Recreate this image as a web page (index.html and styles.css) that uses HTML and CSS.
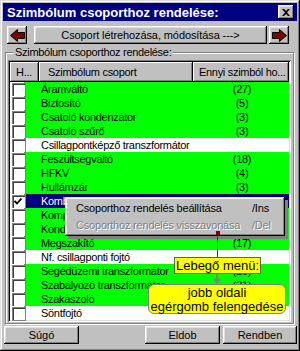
FILE: index.html
```html
<!DOCTYPE html>
<html lang="hu">
<head>
  <meta charset="UTF-8" />
  <title>Szimbólum csoporthoz rendelése</title>
  <link rel="stylesheet" href="styles.css">
</head>
<body>

  <div class="window">

    <!-- title bar -->
    <div class="titlebar">
      <span class="title">Szimbólum csoporthoz rendelése:</span>
      <span class="close">
        <svg width="8" height="7" viewBox="0 0 8 7"><path d="M0 0h2l2 2 2-2h2L5 3.5 8 7H6L4 5 2 7H0l3-3.5z" fill="#000"/></svg>
      </span>
    </div>

    <!-- navigation -->
    <div class="navrow">
      <button class="btn arrow">
        <svg width="15" height="13" viewBox="0 0 15 13"><polygon points="0.5,6.5 7.5,0.5 7.5,3.5 14.5,3.5 14.5,9.5 7.5,9.5 7.5,12.5" fill="#800000" stroke="#000"/></svg>
      </button>
      <button class="btn wide">Csoport létrehozása, módosítása ---&gt;</button>
      <button class="btn arrow">
        <svg width="15" height="13" viewBox="0 0 15 13"><polygon points="14.5,6.5 7.5,0.5 7.5,3.5 0.5,3.5 0.5,9.5 7.5,9.5 7.5,12.5" fill="#800000" stroke="#000"/></svg>
      </button>
    </div>

    <!-- group -->
    <fieldset class="group">
      <legend>Szimbólum csoporthoz rendelése:</legend>
      <div class="list">
        <div class="list-head">
          <div class="hcell c1">H...</div>
          <div class="hcell c2">Szimbólum csoport</div>
          <div class="hcell c3">Ennyi szimból ho...</div>
          <div class="hcell fill"></div>
        </div>
        <div class="rows">
          <div class="row on"><span class="chk"></span><span class="name">Áramváltó</span><span class="count">(27)</span></div>
          <div class="row on"><span class="chk"></span><span class="name">Biztosító</span><span class="count">(5)</span></div>
          <div class="row on"><span class="chk"></span><span class="name">Csatoló kondenzátor</span><span class="count">(3)</span></div>
          <div class="row on"><span class="chk"></span><span class="name">Csatoló szűrő</span><span class="count">(3)</span></div>
          <div class="row"><span class="chk"></span><span class="name">Csillagpontképző transzformátor</span><span class="count"></span></div>
          <div class="row on"><span class="chk"></span><span class="name">Feszültségváltó</span><span class="count">(18)</span></div>
          <div class="row on"><span class="chk"></span><span class="name">HFKV</span><span class="count">(4)</span></div>
          <div class="row on"><span class="chk"></span><span class="name">Hullámzár</span><span class="count">(3)</span></div>
          <div class="row sel"><span class="chk">
            <svg width="8" height="7" viewBox="0 0 8 7"><path d="M0.5 3l2.5 2.5 4.5-5" fill="none" stroke="#000" stroke-width="1.8"/></svg>
          </span><span class="name">Kombinált mérőváltó</span><span class="count">(2)</span></div>
          <div class="row on"><span class="chk"></span><span class="name">Kompenzátor</span><span class="count">(2)</span></div>
          <div class="row on"><span class="chk"></span><span class="name">Kondenzátor</span><span class="count">(6)</span></div>
          <div class="row on"><span class="chk"></span><span class="name">Megszakító</span><span class="count">(17)</span></div>
          <div class="row"><span class="chk"></span><span class="name">Nf. csillagponti fojtó</span><span class="count"></span></div>
          <div class="row on"><span class="chk"></span><span class="name">Segédüzemi transzformátor</span><span class="count">(20)</span></div>
          <div class="row on"><span class="chk"></span><span class="name">Szabályozó transzformátor</span><span class="count">(21)</span></div>
          <div class="row on"><span class="chk"></span><span class="name">Szakaszoló</span><span class="count">(30)</span></div>
          <div class="row"><span class="chk"></span><span class="name">Söntfojtó</span><span class="count"></span></div>
        </div>
      </div>
    </fieldset>

    <!-- buttons -->
    <div class="footer">
      <button class="btn foot">Súgó</button>
      <span class="spacer"></span>
      <button class="btn foot">Eldob</button>
      <button class="btn foot last">Rendben</button>
    </div>

    <!-- popup menu -->
    <div class="menu">
      <div class="menu-item"><span>Csoporthoz rendelés beállítása</span><span class="key">/Ins</span></div>
      <div class="menu-item disabled"><span>Csoporthoz rendelés visszavonása</span><span class="key">/Del</span></div>
    </div>

    <!-- callouts -->
    <div class="pin"></div>
    <div class="pin-line"></div>
    <div class="tag">Lebegő menü:</div>
    <svg class="down" width="10" height="10" viewBox="0 0 10 10"><path d="M4 0h2v5h3L5 10 1 5h3z" fill="#808080"/></svg>
    <div class="bubble">jobb oldali<br>egérgomb felengedése</div>

  </div>

</body>
</html>
```

FILE: styles.css
```css
* { margin: 0; padding: 0; box-sizing: border-box; }

body {
  font-family: 'Liberation Sans', Arial, sans-serif;
  font-size: 11px;
  letter-spacing: -0.3px;
  color: #000;
  background: #c0c0c0;
}

.window {
  position: relative;
  width: 300px;
  height: 351px;
  padding: 3px;
  background: #c0c0c0;
  box-shadow: inset -1px -1px #000, inset 1px 1px #dfdfdf, inset -2px -2px #808080, inset 2px 2px #fff;
}

/* title bar */
.titlebar {
  height: 18px;
  background: #000080;
  display: flex;
  align-items: center;
  justify-content: space-between;
  padding: 0 3px 0 4px;
}

.title {
  color: #fff;
  font-weight: bold;
  font-size: 13px;
  letter-spacing: 0;
}

.close {
  width: 16px;
  height: 14px;
  background: #c0c0c0;
  display: flex;
  align-items: center;
  justify-content: center;
  box-shadow: inset -1px -1px #000, inset 1px 1px #fff, inset -2px -2px #808080, inset 2px 2px #dfdfdf;
}

/* buttons */
.btn {
  font-family: inherit;
  font-size: 11px;
  letter-spacing: inherit;
  color: #000;
  background: #c0c0c0;
  border: none;
  display: flex;
  align-items: center;
  justify-content: center;
  box-shadow: inset -1px -1px #000, inset 1px 1px #fff, inset -2px -2px #808080, inset 2px 2px #dfdfdf;
}

.navrow {
  display: flex;
  height: 18px;
  margin-top: 5px;
  padding-left: 4px;
}

.arrow { width: 20px; height: 18px; }

.wide {
  width: 233px;
  margin: 0 2px 0 7px;
  letter-spacing: -0.1px;
}

/* group */
.group {
  margin: 2px 0 0 2px;
  width: 289px;
  border: 1px solid #808080;
  box-shadow: 1px 1px 0 #fff, inset 1px 1px 0 #fff;
  padding: 1px 1px 1px 2px;
}

.group legend {
  margin-left: 5px;
  padding: 0 2px;
  background: #c0c0c0;
  line-height: 13px;
}

.list {
  width: 283px;
  background: #fff;
  padding: 2px;
  box-shadow: inset 1px 1px #808080, inset -1px -1px #fff, inset 2px 2px #000, inset -2px -2px #dfdfdf;
}

.list-head {
  display: flex;
  height: 20px;
  background: #c0c0c0;
}

.hcell {
  display: flex;
  align-items: center;
  padding-left: 6px;
  white-space: nowrap;
  overflow: hidden;
  box-shadow: inset -1px -1px #000, inset 1px 1px #fff, inset -2px -2px #808080;
}

.c1 { width: 29px; }
.c2 { width: 154px; padding-left: 9px; }
.c3 { width: 96px; }
.fill { flex: 1; padding: 0; box-shadow: inset 1px 1px #fff, inset 0 -1px #000; }

.rows { display: flex; flex-direction: column; }

.row {
  display: flex;
  height: 14px;
  line-height: 14px;
  white-space: nowrap;
}

.chk {
  width: 14px;
  flex: none;
  position: relative;
  background: #fff;
}

.chk::before {
  content: "";
  position: absolute;
  left: 2px;
  top: 1px;
  width: 12px;
  height: 12px;
  border: 1px solid #808080;
  box-shadow: inset 1px 1px #404040;
  background: #fff;
}

.chk svg {
  position: absolute;
  left: 4px;
  top: 4px;
}

.name {
  width: 169px;
  padding-left: 17px;
  flex: none;
}

.count {
  flex: 1;
  text-align: center;
  padding-left: 2px;
}

.row.on .name, .row.on .count { background: #00ff00; }
.row.sel .name, .row.sel .count { background: #000080; color: #fff; }

/* footer */
.footer {
  display: flex;
  gap: 3px;
  margin-top: 2px;
  padding: 0 0 0 1px;
}

.foot { width: 75px; height: 18px; letter-spacing: 0; }
.last { width: 74px; }
.spacer { flex: 1; }

/* popup menu */
.menu {
  position: absolute;
  left: 65px;
  top: 197px;
  width: 220px;
  height: 39px;
  padding: 3px 10px 0 11px;
  background: #c0c0c0;
  white-space: nowrap;
  letter-spacing: -0.2px;
  box-shadow: inset -1px -1px #000, inset 1px 1px #dfdfdf, inset -2px -2px #808080, inset 2px 2px #fff, 3px 3px 0 #808080;
  z-index: 5;
}

.menu-item {
  display: flex;
  justify-content: space-between;
  height: 17px;
  line-height: 17px;
}

.menu-item .key { width: 23px; }

.menu-item.disabled {
  color: #808080;
  text-shadow: 1px 1px #fff;
}

/* callouts */
.pin {
  position: absolute;
  left: 216px;
  top: 231px;
  width: 4px;
  height: 4px;
  background: #800000;
  z-index: 6;
}

.pin-line {
  position: absolute;
  left: 217px;
  top: 235px;
  width: 1px;
  height: 22px;
  background: #c00000;
  z-index: 6;
}

.tag {
  position: absolute;
  left: 174px;
  top: 257px;
  width: 87px;
  height: 17px;
  line-height: 15px;
  text-align: center;
  font-size: 13px;
  letter-spacing: 0;
  background: #ffff00;
  border: 1px solid #606060;
  z-index: 6;
}

.down {
  position: absolute;
  left: 212px;
  top: 274px;
  z-index: 6;
}

.bubble {
  position: absolute;
  left: 148px;
  top: 284px;
  width: 138px;
  height: 30px;
  padding-top: 1px;
  text-align: center;
  font-size: 13px;
  letter-spacing: 0;
  line-height: 14px;
  background: #ffff00;
  border: 1px solid #808080;
  border-radius: 6px;
  z-index: 6;
}
```
